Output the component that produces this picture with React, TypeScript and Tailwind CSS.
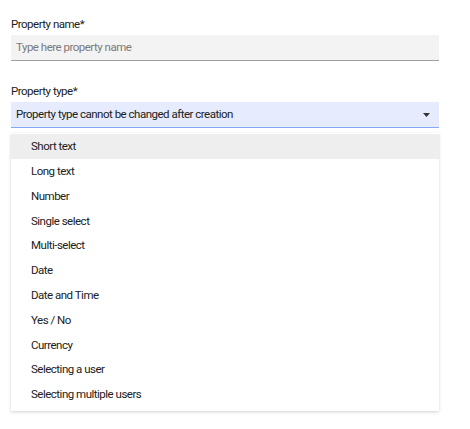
import React from "react";

const items = [
  "Short text",
  "Long text",
  "Number",
  "Single select",
  "Multi-select",
  "Date",
  "Date and Time",
  "Yes / No",
  "Currency",
  "Selecting a user",
  "Selecting multiple users",
];

export default function App() {
  return (
    <div
      className="w-[470px] h-[429px] bg-white text-[#212121] tracking-[-0.5px]"
      style={{ fontFamily: "Roboto, 'Liberation Sans', sans-serif" }}
    >
      <div className="pl-[11px] pr-[31px] pt-[16px]">
        <div className="text-[11.5px] leading-[14px] h-[14px] mb-[5px] pt-[1px]">Property name*</div>
        <div className="h-[26px] bg-[#f3f3f3] border-b border-[#a0a0a0] flex items-center pt-[1px] px-[5px] text-[11.5px] text-[#7a7a7a]">
          Type here property name
        </div>
        <div className="text-[11.5px] leading-[14px] h-[14px] mt-[22px] mb-[5px] pt-[1px]">Property type*</div>
        <div className="h-[26px] bg-[#e6ecfd] border-b border-[#86a9f6] flex items-center justify-between pt-[1px] pl-[5px] pr-[9px] text-[11.5px]">
          <span>Property type cannot be changed after creation</span>
          <svg width="7" height="4" viewBox="0 0 7 4">
            <path d="M0 0 L7 0 L3.5 4 Z" fill="#333" />
          </svg>
        </div>
        <div className="mt-[5px] bg-white shadow-[0_1px_3px_rgba(0,0,0,0.18)] pt-[1px] pb-[4px]">
          {items.map((it, i) => (
            <div
              key={it}
              className={`h-[24.8px] flex items-center pt-[1px] pl-[20px] text-[11.5px] ${i === 0 ? "bg-[#eeeeee]" : ""}`}
            >
              {it}
            </div>
          ))}
        </div>
      </div>
    </div>
  );
}
